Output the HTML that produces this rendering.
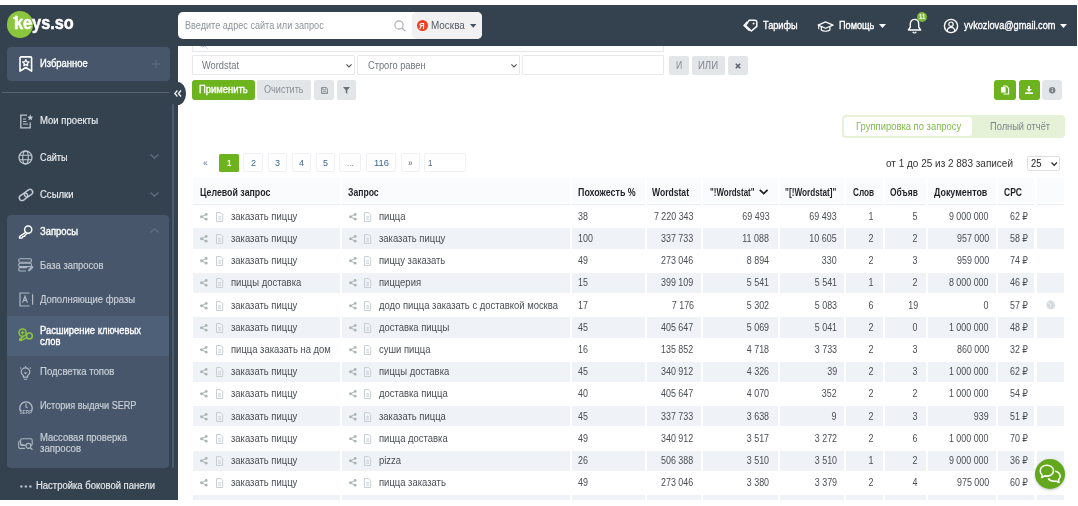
<!DOCTYPE html>
<html lang="ru"><head><meta charset="utf-8"><title>keys.so</title><style>
html,body{margin:0;padding:0;}
body{width:1078px;height:506px;overflow:hidden;background:#fff;position:relative;font-family:'Liberation Sans', sans-serif;}
.root{position:absolute;left:0;top:0;width:1078px;height:506px;overflow:hidden;will-change:transform;}
.a{position:absolute;}
.t{position:absolute;white-space:pre;display:block;}
svg{position:absolute;overflow:visible;}
</style></head><body>
<div class="root">
<div class="a" style="left:192px;top:30px;width:472px;height:22.4px;background:#fff;border:1px solid #e6e8eb;box-sizing:border-box;"></div>
<svg style="left:199px;top:40.4px" width="9" height="9" viewBox="0 0 9 9" ><circle cx="3.6" cy="3.6" r="3.1" fill="none" stroke="#c3c8ce" stroke-width="1"/><path d="M6 6L8.6 8.6" stroke="#c3c8ce" stroke-width="1"/></svg>
<div class="a" style="left:0px;top:5px;width:1077px;height:41.4px;background:#34414e;"></div>
<div class="a" style="left:0px;top:5px;width:177.5px;height:495px;background:#34414e;"></div>
<div class="a" style="left:7.3px;top:11.2px;width:25.6px;height:26.4px;background:#8cc63f;border-radius:13.2px;"></div>
<div class="a" style="left:12.6px;top:17px;width:2.4px;height:1.6px;background:#fff;"></div>
<span id="t0" class="t" style="top:13px;font-size:18px;line-height:20px;color:#fff;font-weight:700;left:14.4px;transform-origin:0 50%;transform:scaleX(0.9052);-webkit-text-stroke:0.5px #fff;">keys.so</span>
<div class="a" style="left:7px;top:46.8px;width:163px;height:34.2px;background:#47566a;border-radius:4px;"></div>
<svg style="left:18.6px;top:55.6px" width="13.6" height="16.6" viewBox="0 0 13.6 16.6" ><path d="M1 1.9a1 1 0 0 1 1-1h9.6a1 1 0 0 1 1 1v13.3L6.8 11.5 1 15.2z" fill="none" stroke="#fff" stroke-width="1.6" stroke-linejoin="round"/><path d="M6.80 3.70L7.74 5.71L9.94 5.98L8.32 7.49L8.74 9.67L6.80 8.60L4.86 9.67L5.28 7.49L3.66 5.98L5.86 5.71z" fill="none" stroke="#fff" stroke-width="1.3" stroke-linejoin="round"/></svg>
<span id="t1" class="t" style="top:58px;font-size:10px;line-height:11px;color:#fff;-webkit-text-stroke:0.35px #fff;left:39.5px;transform-origin:0 50%;transform:scaleX(0.9411);">Избранное</span>
<svg style="left:152px;top:60px" width="8" height="8" viewBox="0 0 8 8" ><path d="M4 0v8M0 4h8" stroke="#5d6d82" stroke-width="1"/></svg>
<div class="a" style="left:2px;top:92px;width:168px;height:1px;background:#566476;"></div>
<div class="a" style="left:168.5px;top:81.5px;width:17px;height:23px;background:#34414e;border-radius:50%"></div>
<svg style="left:174.2px;top:89.8px" width="8" height="7" viewBox="0 0 8 7" ><path d="M3.4 0.5L0.8 3.5 3.4 6.5M7 0.5L4.4 3.5 7 6.5" fill="none" stroke="#fff" stroke-width="1.2"/></svg>
<div class="a" style="left:171.5px;top:104px;width:2.5px;height:364px;background:#4a5a70;border-radius:1px;"></div>
<svg style="left:18.5px;top:113.5px" width="15" height="15" viewBox="0 0 15 15" ><path d="M8 1.2H1.8v12.6h9.4V8.5" fill="none" stroke="#bfc7d0" stroke-width="1.3"/><path d="M4 5h3M4 7.5h3.5M4 10h5" stroke="#bfc7d0" stroke-width="1"/><path d="M11.3 0.6l.9 1.9 2 .3-1.5 1.4.4 2-1.8-1-1.8 1 .4-2L8.4 2.8l2-.3z" fill="#bfc7d0"/></svg>
<span id="t2" class="t" style="top:115px;font-size:10px;line-height:11px;color:#e8ebee;-webkit-text-stroke:0.18px #e8ebee;left:39.6px;transform-origin:0 50%;transform:scaleX(0.9550);">Мои проекты</span>
<svg style="left:17.8px;top:150px" width="15" height="15" viewBox="0 0 15 15" ><circle cx="7.5" cy="7.5" r="6.5" fill="none" stroke="#bfc7d0" stroke-width="1.3"/><ellipse cx="7.5" cy="7.5" rx="2.8" ry="6.5" fill="none" stroke="#bfc7d0" stroke-width="1.1"/><path d="M1 5.3h13M1 9.7h13" stroke="#bfc7d0" stroke-width="1.1"/></svg>
<span id="t3" class="t" style="top:152px;font-size:10px;line-height:11px;color:#e8ebee;-webkit-text-stroke:0.18px #e8ebee;left:39.6px;transform-origin:0 50%;transform:scaleX(0.9091);">Сайты</span>
<svg style="left:149.8px;top:154.2px" width="9" height="5" viewBox="0 0 9 5" ><path d="M0.5 0.5L4.5 4.2 8.5 0.5" fill="none" stroke="#617084" stroke-width="1.3"/></svg>
<svg style="left:18px;top:188.5px" width="16" height="12" viewBox="0 0 16 12" ><g transform="rotate(-36 8 6)" fill="none" stroke="#bfc7d0" stroke-width="1.5"><rect x="0.4" y="3.3" width="9" height="5.4" rx="2.7"/><rect x="6.6" y="3.3" width="9" height="5.4" rx="2.7"/></g></svg>
<span id="t4" class="t" style="top:189px;font-size:10px;line-height:11px;color:#e8ebee;-webkit-text-stroke:0.18px #e8ebee;left:39.6px;transform-origin:0 50%;transform:scaleX(0.9512);">Ссылки</span>
<svg style="left:149.8px;top:192px" width="9" height="5" viewBox="0 0 9 5" ><path d="M0.5 0.5L4.5 4.2 8.5 0.5" fill="none" stroke="#617084" stroke-width="1.3"/></svg>
<div class="a" style="left:7px;top:214.5px;width:161.5px;height:253.5px;background:#47566a;border-radius:4px;"></div>
<svg style="left:17.8px;top:224.5px" width="15" height="14" viewBox="0 0 15 14" ><circle cx="10.2" cy="4.6" r="3.6" fill="none" stroke="#fff" stroke-width="1.5"/><path d="M7.6 7.2L1.5 11.6v1.4h2.6l1-1.6 1.6-.2.6-1.6 1.6-1" fill="none" stroke="#fff" stroke-width="1.4" stroke-linejoin="round" stroke-linecap="round"/></svg>
<span id="t5" class="t" style="top:226px;font-size:10px;line-height:11px;color:#fff;-webkit-text-stroke:0.35px #fff;left:39.6px;transform-origin:0 50%;transform:scaleX(0.9423);">Запросы</span>
<svg style="left:149.8px;top:227.8px" width="9" height="5" viewBox="0 0 9 5" ><path d="M0.5 4.5L4.5 0.8 8.5 4.5" fill="none" stroke="#617084" stroke-width="1.3"/></svg>
<svg style="left:17.8px;top:257.5px" width="16" height="14" viewBox="0 0 16 14" ><rect x="0.8" y="0.8" width="12.6" height="3.4" rx="1.2" fill="none" stroke="#aeb8c4" stroke-width="1.1"/><rect x="0.8" y="5.2" width="12.6" height="3.4" rx="1.2" fill="none" stroke="#aeb8c4" stroke-width="1.1"/><path d="M8 13H2a1.2 1.2 0 0 1-1.2-1.2V10.8A1.2 1.2 0 0 1 2 9.6h7" fill="none" stroke="#aeb8c4" stroke-width="1.1"/><path d="M10 13.4l.6-2.2 3.6-3.4 1.4 1.5-3.5 3.5z" fill="#aeb8c4"/></svg>
<span id="t6" class="t" style="top:260px;font-size:10px;line-height:11px;color:#c9d0d8;-webkit-text-stroke:0.18px #c9d0d8;left:39.6px;transform-origin:0 50%;transform:scaleX(0.9407);">База запросов</span>
<svg style="left:18.5px;top:292px" width="15" height="15" viewBox="0 0 15 15" ><path d="M10.6 1H1v13h9.6" fill="none" stroke="#aeb8c4" stroke-width="1.2"/><path d="M13.6 2.2v10.6" stroke="#aeb8c4" stroke-width="1.2"/><path d="M3.6 10.6L6 4.2 8.4 10.6M4.5 8.4h3" fill="none" stroke="#aeb8c4" stroke-width="1.2"/></svg>
<span id="t7" class="t" style="top:294px;font-size:10px;line-height:11px;color:#c9d0d8;-webkit-text-stroke:0.18px #c9d0d8;left:39.6px;transform-origin:0 50%;transform:scaleX(0.9440);">Дополняющие фразы</span>
<div class="a" style="left:7px;top:316px;width:161.5px;height:39.5px;background:#4e6078;"></div>
<svg style="left:18px;top:328px" width="15" height="15" viewBox="0 0 15 15" ><circle cx="4.6" cy="4.6" r="3.6" fill="none" stroke="#8cc63f" stroke-width="1.5"/><path d="M4.6 2.8v3.6M2.8 4.6h3.6" stroke="#8cc63f" stroke-width="1.1"/><circle cx="11.4" cy="8" r="2.9" fill="none" stroke="#8cc63f" stroke-width="1.5"/><path d="M9 9.6L3.2 12.4l-1.6-.2.4-1.6 1.4.2.2-1.4 1.8-.4" fill="none" stroke="#8cc63f" stroke-width="1.5" stroke-linejoin="round"/></svg>
<span id="t8" class="t" style="top:325px;font-size:10px;line-height:11px;color:#fff;-webkit-text-stroke:0.35px #fff;left:39.6px;transform-origin:0 50%;transform:scaleX(0.9443);">Расширение ключевых</span>
<span id="t9" class="t" style="top:336px;font-size:10px;line-height:11px;color:#fff;-webkit-text-stroke:0.35px #fff;left:39.6px;transform-origin:0 50%;transform:scaleX(0.9392);">слов</span>
<svg style="left:19px;top:365.5px" width="13" height="15" viewBox="0 0 13 15" ><path d="M4.4 11.2V9.6C3 8.8 2.2 7.6 2.2 6.2a4.3 4.3 0 0 1 8.6 0c0 1.4-.8 2.6-2.2 3.4v1.6z" fill="none" stroke="#aeb8c4" stroke-width="1.2"/><path d="M4.8 13.2h3.4M6.5 0v1.2M1.2 1.6l.9.9M11.8 1.6l-.9.9M5.4 6.4l1.1 1.2 1.1-1.2" stroke="#aeb8c4" stroke-width="1.1" fill="none"/></svg>
<span id="t10" class="t" style="top:366px;font-size:10px;line-height:11px;color:#c9d0d8;-webkit-text-stroke:0.18px #c9d0d8;left:39.6px;transform-origin:0 50%;transform:scaleX(0.9583);">Подсветка топов</span>
<svg style="left:17.5px;top:399.5px" width="16" height="14" viewBox="0 0 16 14" ><path d="M2.6 11.2A6.2 6.2 0 1 1 13.4 11.2" fill="none" stroke="#aeb8c4" stroke-width="1.3"/><path d="M8 3.6V7l1.6 1" fill="none" stroke="#aeb8c4" stroke-width="1.1"/><text x="8" y="13.6" font-size="4.6" font-weight="700" text-anchor="middle" fill="#aeb8c4" font-family="Liberation Sans, sans-serif">SERP</text></svg>
<span id="t11" class="t" style="top:400px;font-size:10px;line-height:11px;color:#c9d0d8;-webkit-text-stroke:0.18px #c9d0d8;left:39.6px;transform-origin:0 50%;transform:scaleX(0.9090);">История выдачи SERP</span>
<svg style="left:17.5px;top:437.5px" width="16" height="12" viewBox="0 0 16 12" ><rect x="2.6" y="0.8" width="11.6" height="6.6" rx="1.4" fill="none" stroke="#aeb8c4" stroke-width="1.1"/><path d="M7 10.4H2A1.4 1.4 0 0 1 .7 9V4.4A1.4 1.4 0 0 1 2 3" fill="none" stroke="#aeb8c4" stroke-width="1.1"/><path d="M2.6 6.4h3" stroke="#aeb8c4" stroke-width="1"/><circle cx="10.4" cy="7.8" r="2.5" fill="#47566a" stroke="#aeb8c4" stroke-width="1.2"/><path d="M12.3 9.7l2.2 2" stroke="#aeb8c4" stroke-width="1.3"/></svg>
<span id="t12" class="t" style="top:432px;font-size:10px;line-height:11px;color:#c9d0d8;-webkit-text-stroke:0.18px #c9d0d8;left:39.6px;transform-origin:0 50%;transform:scaleX(0.9492);">Массовая проверка</span>
<span id="t13" class="t" style="top:443px;font-size:10px;line-height:11px;color:#c9d0d8;-webkit-text-stroke:0.18px #c9d0d8;left:39.6px;transform-origin:0 50%;transform:scaleX(0.9608);">запросов</span>
<svg style="left:19.5px;top:484.5px" width="12" height="3" viewBox="0 0 12 3" ><circle cx="1.4" cy="1.5" r="1.3" fill="#aeb8c4"/><circle cx="5.9" cy="1.5" r="1.3" fill="#aeb8c4"/><circle cx="10.4" cy="1.5" r="1.3" fill="#aeb8c4"/></svg>
<span id="t14" class="t" style="top:480px;font-size:10px;line-height:11px;color:#e3e7eb;-webkit-text-stroke:0.18px #e3e7eb;left:36.3px;transform-origin:0 50%;transform:scaleX(0.9473);">Настройка боковой панели</span>
<div class="a" style="left:177.6px;top:12.2px;width:304.6px;height:27.1px;background:#fff;border-radius:5px;"></div>
<div class="a" style="left:411.8px;top:12.2px;width:70.4px;height:27.1px;background:#f1f1f2;border-radius:5px;"></div>
<span id="t15" class="t" style="top:19px;font-size:10.5px;line-height:12px;color:#8d9399;left:185.3px;transform-origin:0 50%;transform:scaleX(0.8681);">Введите адрес сайта или запрос</span>
<svg style="left:394px;top:20px" width="12" height="12" viewBox="0 0 12 12" ><circle cx="5" cy="5" r="4.1" fill="none" stroke="#a9aeb4" stroke-width="1.1"/><path d="M8 8l3.2 3.2" stroke="#a9aeb4" stroke-width="1.2"/></svg>
<div class="a" style="left:416.5px;top:20.2px;width:11px;height:11px;background:#f03e1e;border-radius:6px;"></div>
<span id="t16" class="t" style="top:21px;font-size:8.5px;line-height:10px;color:#fff;font-weight:700;left:419.3px;transform-origin:0 50%;transform:scaleX(0.9166);">Я</span>
<span id="t17" class="t" style="top:19px;font-size:10.5px;line-height:12px;color:#565c64;left:430.5px;transform-origin:0 50%;transform:scaleX(0.9426);">Москва</span>
<svg style="left:469.6px;top:24.2px" width="6.4" height="3.8" viewBox="0 0 6.4 3.8" ><path d="M0 0h6.4L3.2 3.8z" fill="#44536a"/></svg>
<svg style="left:742.5px;top:19px" width="15" height="13" viewBox="0 0 15 13" ><path d="M6.2 1.2h5.6a2 2 0 0 1 2 2v4.2L8.4 12 2.6 6.6z" fill="none" stroke="#fff" stroke-width="1.5" stroke-linejoin="round"/><path d="M4.4 2.6L1 6.4l5.6 5.4" fill="none" stroke="#fff" stroke-width="1.4"/><circle cx="10.6" cy="4.4" r="1" fill="#fff"/></svg>
<span id="t18" class="t" style="top:19px;font-size:10.6px;line-height:12px;color:#fff;-webkit-text-stroke:0.35px #fff;left:762.5px;transform-origin:0 50%;transform:scaleX(0.8618);">Тарифы</span>
<svg style="left:816.8px;top:20.6px" width="17.2" height="11.2" viewBox="0 0 18 12" ><path d="M9 1L1 4.4 9 7.8l8-3.4z" fill="none" stroke="#fff" stroke-width="1.3" stroke-linejoin="round"/><path d="M4.4 6.2v3.4c1.2 1 2.8 1.4 4.6 1.4s3.4-.4 4.6-1.4V6.2" fill="none" stroke="#fff" stroke-width="1.3"/><path d="M1.6 4.8v4" stroke="#fff" stroke-width="1.1"/></svg>
<span id="t19" class="t" style="top:19px;font-size:10.6px;line-height:12px;color:#fff;-webkit-text-stroke:0.35px #fff;left:839px;transform-origin:0 50%;transform:scaleX(0.8651);">Помощь</span>
<svg style="left:879.2px;top:24.4px" width="7" height="4" viewBox="0 0 7 4" ><path d="M0 0h7L3.5 4z" fill="#fff"/></svg>
<svg style="left:907px;top:18px" width="15" height="16" viewBox="0 0 15 16" ><path d="M7.5 1.4c-2.6 0-4.2 2-4.2 4.6v3.2L1.4 12h12.2l-1.9-2.8V6c0-2.6-1.6-4.6-4.2-4.6z" fill="none" stroke="#fff" stroke-width="1.4" stroke-linejoin="round"/><path d="M5.8 13.8a1.8 1.8 0 0 0 3.4 0" fill="none" stroke="#fff" stroke-width="1.2"/></svg>
<div class="a" style="left:917.3px;top:12px;width:9.8px;height:9.8px;background:#7cb83a;border-radius:5px;"></div>
<span id="t20" class="t" style="top:13px;font-size:6.5px;line-height:7px;color:#fff;font-weight:700;left:918.6px;transform-origin:0 50%;transform:scaleX(0.9018);">11</span>
<svg style="left:943.4px;top:18px" width="16" height="16" viewBox="0 0 16 16" ><circle cx="8" cy="8" r="6.6" fill="none" stroke="#fff" stroke-width="1.4"/><circle cx="8" cy="6.2" r="2.2" fill="none" stroke="#fff" stroke-width="1.2"/><path d="M4.2 13.2c.2-2.4 1.6-3.8 3.8-3.8s3.6 1.4 3.8 3.8" fill="none" stroke="#fff" stroke-width="1.2"/></svg>
<span id="t21" class="t" style="top:19px;font-size:10.6px;line-height:12px;color:#fff;-webkit-text-stroke:0.35px #fff;left:964px;transform-origin:0 50%;transform:scaleX(0.8660);">yvkozlova@gmail.com</span>
<svg style="left:1059.5px;top:24px" width="7" height="4" viewBox="0 0 7 4" ><path d="M0 0h7L3.5 4z" fill="#fff"/></svg>
<div class="a" style="left:192px;top:55px;width:162.6px;height:20px;background:#fff;border-radius:1px;border:1px solid #e6e8eb;box-sizing:border-box;"></div>
<span id="t22" class="t" style="top:60px;font-size:10px;line-height:11px;color:#70767d;left:202.3px;transform-origin:0 50%;transform:scaleX(0.9286);">Wordstat</span>
<svg style="left:345.5px;top:63.5px" width="6" height="4" viewBox="0 0 6 4" ><path d="M0.4 0.4L3 3 5.6 0.4" fill="none" stroke="#555" stroke-width="1.1"/></svg>
<div class="a" style="left:357.4px;top:55px;width:162.2px;height:20px;background:#fff;border-radius:1px;border:1px solid #e6e8eb;box-sizing:border-box;"></div>
<span id="t23" class="t" style="top:60px;font-size:10px;line-height:11px;color:#70767d;left:367.9px;transform-origin:0 50%;transform:scaleX(0.9274);">Строго равен</span>
<svg style="left:511px;top:63.5px" width="6" height="4" viewBox="0 0 6 4" ><path d="M0.4 0.4L3 3 5.6 0.4" fill="none" stroke="#555" stroke-width="1.1"/></svg>
<div class="a" style="left:522.3px;top:55px;width:142px;height:19.6px;background:#fff;border-radius:1px;border:1px solid #e6e8eb;box-sizing:border-box;"></div>
<div class="a" style="left:669px;top:56px;width:19.7px;height:19.3px;background:#e3e6e9;border-radius:2px;"></div>
<span id="t24" class="t" style="top:60px;font-size:10px;line-height:11px;color:#838a92;left:675.7px;transform-origin:0 50%;transform:scaleX(0.8626);">И</span>
<div class="a" style="left:691.5px;top:56px;width:33.5px;height:19.3px;background:#e3e6e9;border-radius:2px;"></div>
<span id="t25" class="t" style="top:60px;font-size:10px;line-height:11px;color:#838a92;left:698.2px;transform-origin:0 50%;transform:scaleX(0.9552);">ИЛИ</span>
<div class="a" style="left:727.7px;top:56px;width:20px;height:19.3px;background:#e3e6e9;border-radius:2px;"></div>
<svg style="left:734.8px;top:63px" width="6" height="6" viewBox="0 0 6 6" ><path d="M0.8 0.8l4.4 4.4M5.2 0.8L0.8 5.2" stroke="#59606a" stroke-width="1.5"/></svg>
<div class="a" style="left:192px;top:80px;width:62.6px;height:19.5px;background:#6cb31d;border-radius:3px;"></div>
<span id="t26" class="t" style="top:84px;font-size:10px;line-height:11px;color:#fff;-webkit-text-stroke:0.35px #fff;left:198.9px;transform-origin:0 50%;transform:scaleX(0.9425);">Применить</span>
<div class="a" style="left:257px;top:80px;width:53.8px;height:19.5px;background:#e3e6e9;border-radius:2px;"></div>
<span id="t27" class="t" style="top:84px;font-size:10px;line-height:11px;color:#8b9198;left:264.3px;transform-origin:0 50%;transform:scaleX(0.9097);">Очистить</span>
<div class="a" style="left:314px;top:80px;width:20px;height:19.5px;background:#e3e6e9;border-radius:2px;"></div>
<svg style="left:320.5px;top:86.5px" width="7" height="7" viewBox="0 0 7 7" ><path d="M0.5 0.5h4.8l1.2 1.2v4.8h-6z" fill="none" stroke="#8b9198" stroke-width="1"/><path d="M1.8 0.8v2h3v-2M2 6.4V4.4h3v2" fill="none" stroke="#8b9198" stroke-width=".9"/></svg>
<div class="a" style="left:337px;top:80px;width:19.3px;height:19.5px;background:#e3e6e9;border-radius:2px;"></div>
<svg style="left:343.2px;top:86.6px" width="7" height="7" viewBox="0 0 7 7" ><path d="M0 0h7L4.3 3.2V7L2.7 5.8V3.2z" fill="#6a717a"/></svg>
<div class="a" style="left:994px;top:80px;width:22px;height:19.5px;background:#6cb31d;border-radius:3px;"></div>
<svg style="left:1001px;top:86px" width="8" height="8" viewBox="0 0 8 8" ><path d="M0 1h4.6v5.6H0z" fill="#fff"/><path d="M2 0h3.4l2.2 2.2V8H2.6" fill="none" stroke="#fff" stroke-width="1.1"/></svg>
<div class="a" style="left:1018.6px;top:80px;width:21.2px;height:19.5px;background:#6cb31d;border-radius:3px;"></div>
<svg style="left:1025.2px;top:86px" width="8" height="8" viewBox="0 0 8 8" ><path d="M3 0h2v3h2L4 6 1 3h2z" fill="#fff"/><path d="M0 6.4h8V8H0z" fill="#fff"/></svg>
<div class="a" style="left:1042px;top:80px;width:20.3px;height:19.5px;background:#e3e6e9;border-radius:3px;"></div>
<svg style="left:1049px;top:86.6px" width="6.4" height="6.4" viewBox="0 0 6.4 6.4" ><circle cx="3.2" cy="3.2" r="3.2" fill="#7b828a"/><path d="M3.2 2.8v2.2" stroke="#e3e6e9" stroke-width="1"/><circle cx="3.2" cy="1.6" r=".6" fill="#e3e6e9"/></svg>
<div class="a" style="left:842px;top:115.3px;width:223px;height:23px;background:#e5f2d8;border-radius:4px;"></div>
<div class="a" style="left:844.3px;top:117px;width:128px;height:19.3px;background:#fff;border-radius:3px;"></div>
<span id="t28" class="t" style="top:121px;font-size:10px;line-height:11px;color:#82bb50;left:855.8px;transform-origin:0 50%;transform:scaleX(0.9432);">Группировка по запросу</span>
<span id="t29" class="t" style="top:121px;font-size:10px;line-height:11px;color:#7d858c;left:990.3px;transform-origin:0 50%;transform:scaleX(0.9286);">Полный отчёт</span>
<span id="t30" class="t" style="top:158px;font-size:9px;line-height:10px;color:#8a97ab;font-weight:700;left:203.4px;transform-origin:0 50%;transform:scaleX(0.9171);">«</span>
<div class="a" style="left:219px;top:154.4px;width:19.8px;height:17.7px;background:#6cb31d;border-radius:1.5px;"></div>
<span id="t31" class="t" style="top:157px;font-size:9.6px;line-height:11px;color:#fff;font-weight:700;left:226.8px;transform-origin:0 50%;transform:scaleX(0.8234);">1</span>
<div class="a" style="left:243.4px;top:153.3px;width:19.2px;height:18.8px;background:#fff;border-radius:2px;border:1px solid #eff0f3;box-sizing:border-box;"></div>
<span id="t32" class="t" style="top:157px;font-size:9.6px;line-height:11px;color:#3e6592;left:250.6px;transform-origin:0 50%;transform:scaleX(0.9357);">2</span>
<div class="a" style="left:267.6px;top:153.3px;width:19.2px;height:18.8px;background:#fff;border-radius:2px;border:1px solid #eff0f3;box-sizing:border-box;"></div>
<span id="t33" class="t" style="top:157px;font-size:9.6px;line-height:11px;color:#3e6592;left:274.8px;transform-origin:0 50%;transform:scaleX(0.9357);">3</span>
<div class="a" style="left:291.6px;top:153.3px;width:19.4px;height:18.8px;background:#fff;border-radius:2px;border:1px solid #eff0f3;box-sizing:border-box;"></div>
<span id="t34" class="t" style="top:157px;font-size:9.6px;line-height:11px;color:#3e6592;left:298.8px;transform-origin:0 50%;transform:scaleX(0.9357);">4</span>
<div class="a" style="left:315.8px;top:153.3px;width:19.4px;height:18.8px;background:#fff;border-radius:2px;border:1px solid #eff0f3;box-sizing:border-box;"></div>
<span id="t35" class="t" style="top:157px;font-size:9.6px;line-height:11px;color:#3e6592;left:323px;transform-origin:0 50%;transform:scaleX(0.9357);">5</span>
<div class="a" style="left:339px;top:153.3px;width:22.4px;height:18.8px;background:#fff;border-radius:2px;border:1px solid #eff0f3;box-sizing:border-box;"></div>
<span id="t36" class="t" style="top:157px;font-size:9.6px;line-height:11px;color:#8a929c;left:346.8px;transform-origin:0 50%;transform:scaleX(0.8250);">...</span>
<div class="a" style="left:365.9px;top:153.3px;width:30.6px;height:18.8px;background:#fff;border-radius:2px;border:1px solid #eff0f3;box-sizing:border-box;"></div>
<span id="t37" class="t" style="top:157px;font-size:9.6px;line-height:11px;color:#3e6592;left:373.6px;transform-origin:0 50%;transform:scaleX(0.9806);">116</span>
<div class="a" style="left:400.7px;top:153.3px;width:19.5px;height:18.8px;background:#fff;border-radius:2px;border:1px solid #eff0f3;box-sizing:border-box;"></div>
<span id="t38" class="t" style="top:158px;font-size:9px;line-height:10px;color:#7f8da3;font-weight:700;left:407.8px;transform-origin:0 50%;transform:scaleX(0.9171);">»</span>
<div class="a" style="left:423.5px;top:153.3px;width:42.6px;height:18.8px;background:#fff;border-radius:2px;border:1px solid #eff0f3;box-sizing:border-box;"></div>
<span id="t39" class="t" style="top:157px;font-size:9.6px;line-height:11px;color:#4a6288;left:428.4px;transform-origin:0 50%;transform:scaleX(0.8234);">1</span>
<span id="t40" class="t" style="top:158px;font-size:10.4px;line-height:11px;color:#333;left:886.4px;transform-origin:0 50%;transform:scaleX(0.9611);">от 1 до 25 из 2 883 записей</span>
<div class="a" style="left:1027.4px;top:156.3px;width:32.2px;height:14.4px;background:#fff;border-radius:2px;border:1px solid #dcdfe3;box-sizing:border-box;"></div>
<span id="t41" class="t" style="top:158px;font-size:10.4px;line-height:11px;color:#222;left:1031.3px;transform-origin:0 50%;transform:scaleX(0.8995);">25</span>
<svg style="left:1050.6px;top:161.6px" width="6.4" height="4.4" viewBox="0 0 6.4 4.4" ><path d="M0.5 0.5L3.2 3.3 5.9 0.5" fill="none" stroke="#222" stroke-width="1.2"/></svg>
<div class="a" style="left:193px;top:178px;width:146.5px;height:25px;background:#fafbfc;"></div>
<div class="a" style="left:193px;top:203.8px;width:146.5px;height:1.3px;background:#e8eaee;"></div>
<div class="a" style="left:341.7px;top:178px;width:228.1px;height:25px;background:#fafbfc;"></div>
<div class="a" style="left:341.7px;top:203.8px;width:228.1px;height:1.3px;background:#e8eaee;"></div>
<div class="a" style="left:571.6px;top:178px;width:73.4px;height:25px;background:#fafbfc;"></div>
<div class="a" style="left:571.6px;top:203.8px;width:73.4px;height:1.3px;background:#e8eaee;"></div>
<div class="a" style="left:646.9px;top:178px;width:54.1px;height:25px;background:#fafbfc;"></div>
<div class="a" style="left:646.9px;top:203.8px;width:54.1px;height:1.3px;background:#e8eaee;"></div>
<div class="a" style="left:703.2px;top:178px;width:74.7px;height:25px;background:#fafbfc;"></div>
<div class="a" style="left:703.2px;top:203.8px;width:74.7px;height:1.3px;background:#e8eaee;"></div>
<div class="a" style="left:780px;top:178px;width:64.3px;height:25px;background:#fafbfc;"></div>
<div class="a" style="left:780px;top:203.8px;width:64.3px;height:1.3px;background:#e8eaee;"></div>
<div class="a" style="left:846.4px;top:178px;width:36.3px;height:25px;background:#fafbfc;"></div>
<div class="a" style="left:846.4px;top:203.8px;width:36.3px;height:1.3px;background:#e8eaee;"></div>
<div class="a" style="left:884.7px;top:178px;width:41.7px;height:25px;background:#fafbfc;"></div>
<div class="a" style="left:884.7px;top:203.8px;width:41.7px;height:1.3px;background:#e8eaee;"></div>
<div class="a" style="left:928.3px;top:178px;width:67.8px;height:25px;background:#fafbfc;"></div>
<div class="a" style="left:928.3px;top:203.8px;width:67.8px;height:1.3px;background:#e8eaee;"></div>
<div class="a" style="left:998.3px;top:178px;width:35.9px;height:25px;background:#fafbfc;"></div>
<div class="a" style="left:998.3px;top:203.8px;width:35.9px;height:1.3px;background:#e8eaee;"></div>
<div class="a" style="left:1036.5px;top:178px;width:27.5px;height:25px;background:#fafbfc;"></div>
<div class="a" style="left:1036.5px;top:203.8px;width:27.5px;height:1.3px;background:#e8eaee;"></div>
<span id="t42" class="t" style="top:187px;font-size:10px;line-height:11px;color:#1f2328;font-weight:700;left:199.5px;transform-origin:0 50%;transform:scaleX(0.8809);">Целевой запрос</span>
<span id="t43" class="t" style="top:187px;font-size:10px;line-height:11px;color:#1f2328;font-weight:700;left:348.4px;transform-origin:0 50%;transform:scaleX(0.8616);">Запрос</span>
<span id="t44" class="t" style="top:187px;font-size:10px;line-height:11px;color:#1f2328;font-weight:700;left:578px;transform-origin:0 50%;transform:scaleX(0.8877);">Похожесть %</span>
<span id="t45" class="t" style="top:187px;font-size:10px;line-height:11px;color:#1f2328;font-weight:700;left:652.4px;transform-origin:0 50%;transform:scaleX(0.8573);">Wordstat</span>
<span id="t46" class="t" style="top:187px;font-size:10px;line-height:11px;color:#1f2328;font-weight:700;left:709.5px;transform-origin:0 50%;transform:scaleX(0.7951);">&quot;!Wordstat&quot;</span>
<svg style="left:759px;top:188.5px" width="9.4" height="6" viewBox="0 0 9.4 6" ><path d="M0.8 0.8L4.7 4.6 8.6 0.8" fill="none" stroke="#1f2328" stroke-width="1.8"/></svg>
<span id="t47" class="t" style="top:187px;font-size:10px;line-height:11px;color:#1f2328;font-weight:700;left:784.9px;transform-origin:0 50%;transform:scaleX(0.8224);">&quot;[!Wordstat]&quot;</span>
<span id="t48" class="t" style="top:187px;font-size:10px;line-height:11px;color:#1f2328;font-weight:700;left:852.8px;transform-origin:0 50%;transform:scaleX(0.8209);">Слов</span>
<span id="t49" class="t" style="top:187px;font-size:10px;line-height:11px;color:#1f2328;font-weight:700;left:889.9px;transform-origin:0 50%;transform:scaleX(0.8396);">Объяв</span>
<span id="t50" class="t" style="top:187px;font-size:10px;line-height:11px;color:#1f2328;font-weight:700;left:934.2px;transform-origin:0 50%;transform:scaleX(0.8911);">Документов</span>
<span id="t51" class="t" style="top:187px;font-size:10px;line-height:11px;color:#1f2328;font-weight:700;left:1004.3px;transform-origin:0 50%;transform:scaleX(0.8521);">CPC</span>
<svg style="left:200.2px;top:213.3px" width="7.6" height="7.6" viewBox="0 0 7.6 7.6" ><circle cx="1.5" cy="3.8" r="1.5" fill="#aab6b3"/><circle cx="6.2" cy="1.4" r="1.4" fill="#aab6b3"/><circle cx="6.2" cy="6.2" r="1.4" fill="#aab6b3"/><path d="M1.5 3.8L6.2 1.4M1.5 3.8L6.2 6.2" stroke="#aab6b3" stroke-width="1"/></svg>
<svg style="left:216px;top:212px" width="7.2" height="10" viewBox="0 0 7.2 10" ><path d="M0.5 0.5h4.2l2 2v7h-6.2z" fill="none" stroke="#c3c9cf" stroke-width=".9"/><path d="M2.2 4.6h2.8M2.2 6h2.8M2.2 7.4h2.8" stroke="#c3c9cf" stroke-width=".7"/></svg>
<span id="t52" class="t" style="top:211px;font-size:10px;line-height:11px;color:#4a4e54;left:231px;transform-origin:0 50%;transform:scaleX(0.9450);">заказать пиццу</span>
<svg style="left:348.9px;top:213.3px" width="7.6" height="7.6" viewBox="0 0 7.6 7.6" ><circle cx="1.5" cy="3.8" r="1.5" fill="#aab6b3"/><circle cx="6.2" cy="1.4" r="1.4" fill="#aab6b3"/><circle cx="6.2" cy="6.2" r="1.4" fill="#aab6b3"/><path d="M1.5 3.8L6.2 1.4M1.5 3.8L6.2 6.2" stroke="#aab6b3" stroke-width="1"/></svg>
<svg style="left:364.4px;top:212px" width="7.2" height="10" viewBox="0 0 7.2 10" ><path d="M0.5 0.5h4.2l2 2v7h-6.2z" fill="none" stroke="#c3c9cf" stroke-width=".9"/><path d="M2.2 4.6h2.8M2.2 6h2.8M2.2 7.4h2.8" stroke="#c3c9cf" stroke-width=".7"/></svg>
<span id="t53" class="t" style="top:211px;font-size:10px;line-height:11px;color:#4a4e54;left:379px;transform-origin:0 50%;transform:scaleX(0.9450);">пицца</span>
<span id="t54" class="t" style="top:211px;font-size:10px;line-height:11px;color:#4a4e54;left:578px;transform-origin:0 50%;transform:scaleX(0.8900);">38</span>
<span id="t55" class="t" style="top:211px;font-size:10px;line-height:11px;color:#4a4e54;right:384.4px;transform-origin:100% 50%;transform:scaleX(0.8900);">7 220 343</span>
<span id="t56" class="t" style="top:211px;font-size:10px;line-height:11px;color:#4a4e54;right:308.7px;transform-origin:100% 50%;transform:scaleX(0.8900);">69 493</span>
<span id="t57" class="t" style="top:211px;font-size:10px;line-height:11px;color:#4a4e54;right:241px;transform-origin:100% 50%;transform:scaleX(0.8900);">69 493</span>
<span id="t58" class="t" style="top:211px;font-size:10px;line-height:11px;color:#4a4e54;right:204px;transform-origin:100% 50%;transform:scaleX(0.8900);">1</span>
<span id="t59" class="t" style="top:211px;font-size:10px;line-height:11px;color:#4a4e54;right:160px;transform-origin:100% 50%;transform:scaleX(0.8900);">5</span>
<span id="t60" class="t" style="top:211px;font-size:10px;line-height:11px;color:#4a4e54;right:89.3px;transform-origin:100% 50%;transform:scaleX(0.8900);">9 000 000</span>
<span id="t61" class="t" style="top:211px;font-size:10px;line-height:11px;color:#4a4e54;left:1009.8px;transform-origin:0 50%;transform:scaleX(0.8875);">62 <span style="font-family:DejaVu Sans,sans-serif">₽</span></span>
<div class="a" style="left:193px;top:228.32px;width:146.5px;height:20.4px;background:#eff3f7;"></div>
<div class="a" style="left:341.7px;top:228.32px;width:228.1px;height:20.4px;background:#eff3f7;"></div>
<div class="a" style="left:571.6px;top:228.32px;width:73.4px;height:20.4px;background:#eff3f7;"></div>
<div class="a" style="left:646.9px;top:228.32px;width:54.1px;height:20.4px;background:#eff3f7;"></div>
<div class="a" style="left:703.2px;top:228.32px;width:74.7px;height:20.4px;background:#eff3f7;"></div>
<div class="a" style="left:780px;top:228.32px;width:64.3px;height:20.4px;background:#eff3f7;"></div>
<div class="a" style="left:846.4px;top:228.32px;width:36.3px;height:20.4px;background:#eff3f7;"></div>
<div class="a" style="left:884.7px;top:228.32px;width:41.7px;height:20.4px;background:#eff3f7;"></div>
<div class="a" style="left:928.3px;top:228.32px;width:67.8px;height:20.4px;background:#eff3f7;"></div>
<div class="a" style="left:998.3px;top:228.32px;width:35.9px;height:20.4px;background:#eff3f7;"></div>
<div class="a" style="left:1036.5px;top:228.32px;width:27.5px;height:20.4px;background:#eff3f7;"></div>
<svg style="left:200.2px;top:235.3px" width="7.6" height="7.6" viewBox="0 0 7.6 7.6" ><circle cx="1.5" cy="3.8" r="1.5" fill="#aab6b3"/><circle cx="6.2" cy="1.4" r="1.4" fill="#aab6b3"/><circle cx="6.2" cy="6.2" r="1.4" fill="#aab6b3"/><path d="M1.5 3.8L6.2 1.4M1.5 3.8L6.2 6.2" stroke="#aab6b3" stroke-width="1"/></svg>
<svg style="left:216px;top:234px" width="7.2" height="10" viewBox="0 0 7.2 10" ><path d="M0.5 0.5h4.2l2 2v7h-6.2z" fill="none" stroke="#c3c9cf" stroke-width=".9"/><path d="M2.2 4.6h2.8M2.2 6h2.8M2.2 7.4h2.8" stroke="#c3c9cf" stroke-width=".7"/></svg>
<span id="t62" class="t" style="top:233px;font-size:10px;line-height:11px;color:#4a4e54;left:231px;transform-origin:0 50%;transform:scaleX(0.9450);">заказать пиццу</span>
<svg style="left:348.9px;top:235.3px" width="7.6" height="7.6" viewBox="0 0 7.6 7.6" ><circle cx="1.5" cy="3.8" r="1.5" fill="#aab6b3"/><circle cx="6.2" cy="1.4" r="1.4" fill="#aab6b3"/><circle cx="6.2" cy="6.2" r="1.4" fill="#aab6b3"/><path d="M1.5 3.8L6.2 1.4M1.5 3.8L6.2 6.2" stroke="#aab6b3" stroke-width="1"/></svg>
<svg style="left:364.4px;top:234px" width="7.2" height="10" viewBox="0 0 7.2 10" ><path d="M0.5 0.5h4.2l2 2v7h-6.2z" fill="none" stroke="#c3c9cf" stroke-width=".9"/><path d="M2.2 4.6h2.8M2.2 6h2.8M2.2 7.4h2.8" stroke="#c3c9cf" stroke-width=".7"/></svg>
<span id="t63" class="t" style="top:233px;font-size:10px;line-height:11px;color:#4a4e54;left:379px;transform-origin:0 50%;transform:scaleX(0.9450);">заказать пиццу</span>
<span id="t64" class="t" style="top:233px;font-size:10px;line-height:11px;color:#4a4e54;left:578px;transform-origin:0 50%;transform:scaleX(0.8900);">100</span>
<span id="t65" class="t" style="top:233px;font-size:10px;line-height:11px;color:#4a4e54;right:384.4px;transform-origin:100% 50%;transform:scaleX(0.8900);">337 733</span>
<span id="t66" class="t" style="top:233px;font-size:10px;line-height:11px;color:#4a4e54;right:308.7px;transform-origin:100% 50%;transform:scaleX(0.8900);">11 088</span>
<span id="t67" class="t" style="top:233px;font-size:10px;line-height:11px;color:#4a4e54;right:241px;transform-origin:100% 50%;transform:scaleX(0.8900);">10 605</span>
<span id="t68" class="t" style="top:233px;font-size:10px;line-height:11px;color:#4a4e54;right:204px;transform-origin:100% 50%;transform:scaleX(0.8900);">2</span>
<span id="t69" class="t" style="top:233px;font-size:10px;line-height:11px;color:#4a4e54;right:160px;transform-origin:100% 50%;transform:scaleX(0.8900);">2</span>
<span id="t70" class="t" style="top:233px;font-size:10px;line-height:11px;color:#4a4e54;right:89.3px;transform-origin:100% 50%;transform:scaleX(0.8900);">957 000</span>
<span id="t71" class="t" style="top:233px;font-size:10px;line-height:11px;color:#4a4e54;left:1009.8px;transform-origin:0 50%;transform:scaleX(0.8875);">58 <span style="font-family:DejaVu Sans,sans-serif">₽</span></span>
<svg style="left:200.2px;top:257.3px" width="7.6" height="7.6" viewBox="0 0 7.6 7.6" ><circle cx="1.5" cy="3.8" r="1.5" fill="#aab6b3"/><circle cx="6.2" cy="1.4" r="1.4" fill="#aab6b3"/><circle cx="6.2" cy="6.2" r="1.4" fill="#aab6b3"/><path d="M1.5 3.8L6.2 1.4M1.5 3.8L6.2 6.2" stroke="#aab6b3" stroke-width="1"/></svg>
<svg style="left:216px;top:256px" width="7.2" height="10" viewBox="0 0 7.2 10" ><path d="M0.5 0.5h4.2l2 2v7h-6.2z" fill="none" stroke="#c3c9cf" stroke-width=".9"/><path d="M2.2 4.6h2.8M2.2 6h2.8M2.2 7.4h2.8" stroke="#c3c9cf" stroke-width=".7"/></svg>
<span id="t72" class="t" style="top:255px;font-size:10px;line-height:11px;color:#4a4e54;left:231px;transform-origin:0 50%;transform:scaleX(0.9450);">заказать пиццу</span>
<svg style="left:348.9px;top:257.3px" width="7.6" height="7.6" viewBox="0 0 7.6 7.6" ><circle cx="1.5" cy="3.8" r="1.5" fill="#aab6b3"/><circle cx="6.2" cy="1.4" r="1.4" fill="#aab6b3"/><circle cx="6.2" cy="6.2" r="1.4" fill="#aab6b3"/><path d="M1.5 3.8L6.2 1.4M1.5 3.8L6.2 6.2" stroke="#aab6b3" stroke-width="1"/></svg>
<svg style="left:364.4px;top:256px" width="7.2" height="10" viewBox="0 0 7.2 10" ><path d="M0.5 0.5h4.2l2 2v7h-6.2z" fill="none" stroke="#c3c9cf" stroke-width=".9"/><path d="M2.2 4.6h2.8M2.2 6h2.8M2.2 7.4h2.8" stroke="#c3c9cf" stroke-width=".7"/></svg>
<span id="t73" class="t" style="top:255px;font-size:10px;line-height:11px;color:#4a4e54;left:379px;transform-origin:0 50%;transform:scaleX(0.9450);">пиццу заказать</span>
<span id="t74" class="t" style="top:255px;font-size:10px;line-height:11px;color:#4a4e54;left:578px;transform-origin:0 50%;transform:scaleX(0.8900);">49</span>
<span id="t75" class="t" style="top:255px;font-size:10px;line-height:11px;color:#4a4e54;right:384.4px;transform-origin:100% 50%;transform:scaleX(0.8900);">273 046</span>
<span id="t76" class="t" style="top:255px;font-size:10px;line-height:11px;color:#4a4e54;right:308.7px;transform-origin:100% 50%;transform:scaleX(0.8900);">8 894</span>
<span id="t77" class="t" style="top:255px;font-size:10px;line-height:11px;color:#4a4e54;right:241px;transform-origin:100% 50%;transform:scaleX(0.8900);">330</span>
<span id="t78" class="t" style="top:255px;font-size:10px;line-height:11px;color:#4a4e54;right:204px;transform-origin:100% 50%;transform:scaleX(0.8900);">2</span>
<span id="t79" class="t" style="top:255px;font-size:10px;line-height:11px;color:#4a4e54;right:160px;transform-origin:100% 50%;transform:scaleX(0.8900);">3</span>
<span id="t80" class="t" style="top:255px;font-size:10px;line-height:11px;color:#4a4e54;right:89.3px;transform-origin:100% 50%;transform:scaleX(0.8900);">959 000</span>
<span id="t81" class="t" style="top:255px;font-size:10px;line-height:11px;color:#4a4e54;left:1009.8px;transform-origin:0 50%;transform:scaleX(0.8875);">74 <span style="font-family:DejaVu Sans,sans-serif">₽</span></span>
<div class="a" style="left:193px;top:272.76px;width:146.5px;height:20.4px;background:#eff3f7;"></div>
<div class="a" style="left:341.7px;top:272.76px;width:228.1px;height:20.4px;background:#eff3f7;"></div>
<div class="a" style="left:571.6px;top:272.76px;width:73.4px;height:20.4px;background:#eff3f7;"></div>
<div class="a" style="left:646.9px;top:272.76px;width:54.1px;height:20.4px;background:#eff3f7;"></div>
<div class="a" style="left:703.2px;top:272.76px;width:74.7px;height:20.4px;background:#eff3f7;"></div>
<div class="a" style="left:780px;top:272.76px;width:64.3px;height:20.4px;background:#eff3f7;"></div>
<div class="a" style="left:846.4px;top:272.76px;width:36.3px;height:20.4px;background:#eff3f7;"></div>
<div class="a" style="left:884.7px;top:272.76px;width:41.7px;height:20.4px;background:#eff3f7;"></div>
<div class="a" style="left:928.3px;top:272.76px;width:67.8px;height:20.4px;background:#eff3f7;"></div>
<div class="a" style="left:998.3px;top:272.76px;width:35.9px;height:20.4px;background:#eff3f7;"></div>
<div class="a" style="left:1036.5px;top:272.76px;width:27.5px;height:20.4px;background:#eff3f7;"></div>
<svg style="left:200.2px;top:279.3px" width="7.6" height="7.6" viewBox="0 0 7.6 7.6" ><circle cx="1.5" cy="3.8" r="1.5" fill="#aab6b3"/><circle cx="6.2" cy="1.4" r="1.4" fill="#aab6b3"/><circle cx="6.2" cy="6.2" r="1.4" fill="#aab6b3"/><path d="M1.5 3.8L6.2 1.4M1.5 3.8L6.2 6.2" stroke="#aab6b3" stroke-width="1"/></svg>
<svg style="left:216px;top:278px" width="7.2" height="10" viewBox="0 0 7.2 10" ><path d="M0.5 0.5h4.2l2 2v7h-6.2z" fill="none" stroke="#c3c9cf" stroke-width=".9"/><path d="M2.2 4.6h2.8M2.2 6h2.8M2.2 7.4h2.8" stroke="#c3c9cf" stroke-width=".7"/></svg>
<span id="t82" class="t" style="top:277px;font-size:10px;line-height:11px;color:#4a4e54;left:231px;transform-origin:0 50%;transform:scaleX(0.9450);">пиццы доставка</span>
<svg style="left:348.9px;top:279.3px" width="7.6" height="7.6" viewBox="0 0 7.6 7.6" ><circle cx="1.5" cy="3.8" r="1.5" fill="#aab6b3"/><circle cx="6.2" cy="1.4" r="1.4" fill="#aab6b3"/><circle cx="6.2" cy="6.2" r="1.4" fill="#aab6b3"/><path d="M1.5 3.8L6.2 1.4M1.5 3.8L6.2 6.2" stroke="#aab6b3" stroke-width="1"/></svg>
<svg style="left:364.4px;top:278px" width="7.2" height="10" viewBox="0 0 7.2 10" ><path d="M0.5 0.5h4.2l2 2v7h-6.2z" fill="none" stroke="#c3c9cf" stroke-width=".9"/><path d="M2.2 4.6h2.8M2.2 6h2.8M2.2 7.4h2.8" stroke="#c3c9cf" stroke-width=".7"/></svg>
<span id="t83" class="t" style="top:277px;font-size:10px;line-height:11px;color:#4a4e54;left:379px;transform-origin:0 50%;transform:scaleX(0.9450);">пиццерия</span>
<span id="t84" class="t" style="top:277px;font-size:10px;line-height:11px;color:#4a4e54;left:578px;transform-origin:0 50%;transform:scaleX(0.8900);">15</span>
<span id="t85" class="t" style="top:277px;font-size:10px;line-height:11px;color:#4a4e54;right:384.4px;transform-origin:100% 50%;transform:scaleX(0.8900);">399 109</span>
<span id="t86" class="t" style="top:277px;font-size:10px;line-height:11px;color:#4a4e54;right:308.7px;transform-origin:100% 50%;transform:scaleX(0.8900);">5 541</span>
<span id="t87" class="t" style="top:277px;font-size:10px;line-height:11px;color:#4a4e54;right:241px;transform-origin:100% 50%;transform:scaleX(0.8900);">5 541</span>
<span id="t88" class="t" style="top:277px;font-size:10px;line-height:11px;color:#4a4e54;right:204px;transform-origin:100% 50%;transform:scaleX(0.8900);">1</span>
<span id="t89" class="t" style="top:277px;font-size:10px;line-height:11px;color:#4a4e54;right:160px;transform-origin:100% 50%;transform:scaleX(0.8900);">2</span>
<span id="t90" class="t" style="top:277px;font-size:10px;line-height:11px;color:#4a4e54;right:89.3px;transform-origin:100% 50%;transform:scaleX(0.8900);">8 000 000</span>
<span id="t91" class="t" style="top:277px;font-size:10px;line-height:11px;color:#4a4e54;left:1009.8px;transform-origin:0 50%;transform:scaleX(0.8875);">46 <span style="font-family:DejaVu Sans,sans-serif">₽</span></span>
<svg style="left:200.2px;top:302.3px" width="7.6" height="7.6" viewBox="0 0 7.6 7.6" ><circle cx="1.5" cy="3.8" r="1.5" fill="#aab6b3"/><circle cx="6.2" cy="1.4" r="1.4" fill="#aab6b3"/><circle cx="6.2" cy="6.2" r="1.4" fill="#aab6b3"/><path d="M1.5 3.8L6.2 1.4M1.5 3.8L6.2 6.2" stroke="#aab6b3" stroke-width="1"/></svg>
<svg style="left:216px;top:301px" width="7.2" height="10" viewBox="0 0 7.2 10" ><path d="M0.5 0.5h4.2l2 2v7h-6.2z" fill="none" stroke="#c3c9cf" stroke-width=".9"/><path d="M2.2 4.6h2.8M2.2 6h2.8M2.2 7.4h2.8" stroke="#c3c9cf" stroke-width=".7"/></svg>
<span id="t92" class="t" style="top:300px;font-size:10px;line-height:11px;color:#4a4e54;left:231px;transform-origin:0 50%;transform:scaleX(0.9450);">заказать пиццу</span>
<svg style="left:348.9px;top:302.3px" width="7.6" height="7.6" viewBox="0 0 7.6 7.6" ><circle cx="1.5" cy="3.8" r="1.5" fill="#aab6b3"/><circle cx="6.2" cy="1.4" r="1.4" fill="#aab6b3"/><circle cx="6.2" cy="6.2" r="1.4" fill="#aab6b3"/><path d="M1.5 3.8L6.2 1.4M1.5 3.8L6.2 6.2" stroke="#aab6b3" stroke-width="1"/></svg>
<svg style="left:364.4px;top:301px" width="7.2" height="10" viewBox="0 0 7.2 10" ><path d="M0.5 0.5h4.2l2 2v7h-6.2z" fill="none" stroke="#c3c9cf" stroke-width=".9"/><path d="M2.2 4.6h2.8M2.2 6h2.8M2.2 7.4h2.8" stroke="#c3c9cf" stroke-width=".7"/></svg>
<span id="t93" class="t" style="top:300px;font-size:10px;line-height:11px;color:#4a4e54;left:379px;transform-origin:0 50%;transform:scaleX(0.9450);">додо пицца заказать с доставкой москва</span>
<span id="t94" class="t" style="top:300px;font-size:10px;line-height:11px;color:#4a4e54;left:578px;transform-origin:0 50%;transform:scaleX(0.8900);">17</span>
<span id="t95" class="t" style="top:300px;font-size:10px;line-height:11px;color:#4a4e54;right:384.4px;transform-origin:100% 50%;transform:scaleX(0.8900);">7 176</span>
<span id="t96" class="t" style="top:300px;font-size:10px;line-height:11px;color:#4a4e54;right:308.7px;transform-origin:100% 50%;transform:scaleX(0.8900);">5 302</span>
<span id="t97" class="t" style="top:300px;font-size:10px;line-height:11px;color:#4a4e54;right:241px;transform-origin:100% 50%;transform:scaleX(0.8900);">5 083</span>
<span id="t98" class="t" style="top:300px;font-size:10px;line-height:11px;color:#4a4e54;right:204px;transform-origin:100% 50%;transform:scaleX(0.8900);">6</span>
<span id="t99" class="t" style="top:300px;font-size:10px;line-height:11px;color:#4a4e54;right:160px;transform-origin:100% 50%;transform:scaleX(0.8900);">19</span>
<span id="t100" class="t" style="top:300px;font-size:10px;line-height:11px;color:#4a4e54;right:89.3px;transform-origin:100% 50%;transform:scaleX(0.8900);">0</span>
<span id="t101" class="t" style="top:300px;font-size:10px;line-height:11px;color:#4a4e54;left:1009.8px;transform-origin:0 50%;transform:scaleX(0.8875);">57 <span style="font-family:DejaVu Sans,sans-serif">₽</span></span>
<div class="a" style="left:193px;top:317.2px;width:146.5px;height:20.4px;background:#eff3f7;"></div>
<div class="a" style="left:341.7px;top:317.2px;width:228.1px;height:20.4px;background:#eff3f7;"></div>
<div class="a" style="left:571.6px;top:317.2px;width:73.4px;height:20.4px;background:#eff3f7;"></div>
<div class="a" style="left:646.9px;top:317.2px;width:54.1px;height:20.4px;background:#eff3f7;"></div>
<div class="a" style="left:703.2px;top:317.2px;width:74.7px;height:20.4px;background:#eff3f7;"></div>
<div class="a" style="left:780px;top:317.2px;width:64.3px;height:20.4px;background:#eff3f7;"></div>
<div class="a" style="left:846.4px;top:317.2px;width:36.3px;height:20.4px;background:#eff3f7;"></div>
<div class="a" style="left:884.7px;top:317.2px;width:41.7px;height:20.4px;background:#eff3f7;"></div>
<div class="a" style="left:928.3px;top:317.2px;width:67.8px;height:20.4px;background:#eff3f7;"></div>
<div class="a" style="left:998.3px;top:317.2px;width:35.9px;height:20.4px;background:#eff3f7;"></div>
<div class="a" style="left:1036.5px;top:317.2px;width:27.5px;height:20.4px;background:#eff3f7;"></div>
<svg style="left:200.2px;top:324.3px" width="7.6" height="7.6" viewBox="0 0 7.6 7.6" ><circle cx="1.5" cy="3.8" r="1.5" fill="#aab6b3"/><circle cx="6.2" cy="1.4" r="1.4" fill="#aab6b3"/><circle cx="6.2" cy="6.2" r="1.4" fill="#aab6b3"/><path d="M1.5 3.8L6.2 1.4M1.5 3.8L6.2 6.2" stroke="#aab6b3" stroke-width="1"/></svg>
<svg style="left:216px;top:323px" width="7.2" height="10" viewBox="0 0 7.2 10" ><path d="M0.5 0.5h4.2l2 2v7h-6.2z" fill="none" stroke="#c3c9cf" stroke-width=".9"/><path d="M2.2 4.6h2.8M2.2 6h2.8M2.2 7.4h2.8" stroke="#c3c9cf" stroke-width=".7"/></svg>
<span id="t102" class="t" style="top:322px;font-size:10px;line-height:11px;color:#4a4e54;left:231px;transform-origin:0 50%;transform:scaleX(0.9450);">заказать пиццу</span>
<svg style="left:348.9px;top:324.3px" width="7.6" height="7.6" viewBox="0 0 7.6 7.6" ><circle cx="1.5" cy="3.8" r="1.5" fill="#aab6b3"/><circle cx="6.2" cy="1.4" r="1.4" fill="#aab6b3"/><circle cx="6.2" cy="6.2" r="1.4" fill="#aab6b3"/><path d="M1.5 3.8L6.2 1.4M1.5 3.8L6.2 6.2" stroke="#aab6b3" stroke-width="1"/></svg>
<svg style="left:364.4px;top:323px" width="7.2" height="10" viewBox="0 0 7.2 10" ><path d="M0.5 0.5h4.2l2 2v7h-6.2z" fill="none" stroke="#c3c9cf" stroke-width=".9"/><path d="M2.2 4.6h2.8M2.2 6h2.8M2.2 7.4h2.8" stroke="#c3c9cf" stroke-width=".7"/></svg>
<span id="t103" class="t" style="top:322px;font-size:10px;line-height:11px;color:#4a4e54;left:379px;transform-origin:0 50%;transform:scaleX(0.9450);">доставка пиццы</span>
<span id="t104" class="t" style="top:322px;font-size:10px;line-height:11px;color:#4a4e54;left:578px;transform-origin:0 50%;transform:scaleX(0.8900);">45</span>
<span id="t105" class="t" style="top:322px;font-size:10px;line-height:11px;color:#4a4e54;right:384.4px;transform-origin:100% 50%;transform:scaleX(0.8900);">405 647</span>
<span id="t106" class="t" style="top:322px;font-size:10px;line-height:11px;color:#4a4e54;right:308.7px;transform-origin:100% 50%;transform:scaleX(0.8900);">5 069</span>
<span id="t107" class="t" style="top:322px;font-size:10px;line-height:11px;color:#4a4e54;right:241px;transform-origin:100% 50%;transform:scaleX(0.8900);">5 041</span>
<span id="t108" class="t" style="top:322px;font-size:10px;line-height:11px;color:#4a4e54;right:204px;transform-origin:100% 50%;transform:scaleX(0.8900);">2</span>
<span id="t109" class="t" style="top:322px;font-size:10px;line-height:11px;color:#4a4e54;right:160px;transform-origin:100% 50%;transform:scaleX(0.8900);">0</span>
<span id="t110" class="t" style="top:322px;font-size:10px;line-height:11px;color:#4a4e54;right:89.3px;transform-origin:100% 50%;transform:scaleX(0.8900);">1 000 000</span>
<span id="t111" class="t" style="top:322px;font-size:10px;line-height:11px;color:#4a4e54;left:1009.8px;transform-origin:0 50%;transform:scaleX(0.8875);">48 <span style="font-family:DejaVu Sans,sans-serif">₽</span></span>
<svg style="left:200.2px;top:346.3px" width="7.6" height="7.6" viewBox="0 0 7.6 7.6" ><circle cx="1.5" cy="3.8" r="1.5" fill="#aab6b3"/><circle cx="6.2" cy="1.4" r="1.4" fill="#aab6b3"/><circle cx="6.2" cy="6.2" r="1.4" fill="#aab6b3"/><path d="M1.5 3.8L6.2 1.4M1.5 3.8L6.2 6.2" stroke="#aab6b3" stroke-width="1"/></svg>
<svg style="left:216px;top:345px" width="7.2" height="10" viewBox="0 0 7.2 10" ><path d="M0.5 0.5h4.2l2 2v7h-6.2z" fill="none" stroke="#c3c9cf" stroke-width=".9"/><path d="M2.2 4.6h2.8M2.2 6h2.8M2.2 7.4h2.8" stroke="#c3c9cf" stroke-width=".7"/></svg>
<span id="t112" class="t" style="top:344px;font-size:10px;line-height:11px;color:#4a4e54;left:231px;transform-origin:0 50%;transform:scaleX(0.9450);">пицца заказать на дом</span>
<svg style="left:348.9px;top:346.3px" width="7.6" height="7.6" viewBox="0 0 7.6 7.6" ><circle cx="1.5" cy="3.8" r="1.5" fill="#aab6b3"/><circle cx="6.2" cy="1.4" r="1.4" fill="#aab6b3"/><circle cx="6.2" cy="6.2" r="1.4" fill="#aab6b3"/><path d="M1.5 3.8L6.2 1.4M1.5 3.8L6.2 6.2" stroke="#aab6b3" stroke-width="1"/></svg>
<svg style="left:364.4px;top:345px" width="7.2" height="10" viewBox="0 0 7.2 10" ><path d="M0.5 0.5h4.2l2 2v7h-6.2z" fill="none" stroke="#c3c9cf" stroke-width=".9"/><path d="M2.2 4.6h2.8M2.2 6h2.8M2.2 7.4h2.8" stroke="#c3c9cf" stroke-width=".7"/></svg>
<span id="t113" class="t" style="top:344px;font-size:10px;line-height:11px;color:#4a4e54;left:379px;transform-origin:0 50%;transform:scaleX(0.9450);">суши пицца</span>
<span id="t114" class="t" style="top:344px;font-size:10px;line-height:11px;color:#4a4e54;left:578px;transform-origin:0 50%;transform:scaleX(0.8900);">16</span>
<span id="t115" class="t" style="top:344px;font-size:10px;line-height:11px;color:#4a4e54;right:384.4px;transform-origin:100% 50%;transform:scaleX(0.8900);">135 852</span>
<span id="t116" class="t" style="top:344px;font-size:10px;line-height:11px;color:#4a4e54;right:308.7px;transform-origin:100% 50%;transform:scaleX(0.8900);">4 718</span>
<span id="t117" class="t" style="top:344px;font-size:10px;line-height:11px;color:#4a4e54;right:241px;transform-origin:100% 50%;transform:scaleX(0.8900);">3 733</span>
<span id="t118" class="t" style="top:344px;font-size:10px;line-height:11px;color:#4a4e54;right:204px;transform-origin:100% 50%;transform:scaleX(0.8900);">2</span>
<span id="t119" class="t" style="top:344px;font-size:10px;line-height:11px;color:#4a4e54;right:160px;transform-origin:100% 50%;transform:scaleX(0.8900);">3</span>
<span id="t120" class="t" style="top:344px;font-size:10px;line-height:11px;color:#4a4e54;right:89.3px;transform-origin:100% 50%;transform:scaleX(0.8900);">860 000</span>
<span id="t121" class="t" style="top:344px;font-size:10px;line-height:11px;color:#4a4e54;left:1009.8px;transform-origin:0 50%;transform:scaleX(0.8875);">32 <span style="font-family:DejaVu Sans,sans-serif">₽</span></span>
<div class="a" style="left:193px;top:361.64px;width:146.5px;height:20.4px;background:#eff3f7;"></div>
<div class="a" style="left:341.7px;top:361.64px;width:228.1px;height:20.4px;background:#eff3f7;"></div>
<div class="a" style="left:571.6px;top:361.64px;width:73.4px;height:20.4px;background:#eff3f7;"></div>
<div class="a" style="left:646.9px;top:361.64px;width:54.1px;height:20.4px;background:#eff3f7;"></div>
<div class="a" style="left:703.2px;top:361.64px;width:74.7px;height:20.4px;background:#eff3f7;"></div>
<div class="a" style="left:780px;top:361.64px;width:64.3px;height:20.4px;background:#eff3f7;"></div>
<div class="a" style="left:846.4px;top:361.64px;width:36.3px;height:20.4px;background:#eff3f7;"></div>
<div class="a" style="left:884.7px;top:361.64px;width:41.7px;height:20.4px;background:#eff3f7;"></div>
<div class="a" style="left:928.3px;top:361.64px;width:67.8px;height:20.4px;background:#eff3f7;"></div>
<div class="a" style="left:998.3px;top:361.64px;width:35.9px;height:20.4px;background:#eff3f7;"></div>
<div class="a" style="left:1036.5px;top:361.64px;width:27.5px;height:20.4px;background:#eff3f7;"></div>
<svg style="left:200.2px;top:368.3px" width="7.6" height="7.6" viewBox="0 0 7.6 7.6" ><circle cx="1.5" cy="3.8" r="1.5" fill="#aab6b3"/><circle cx="6.2" cy="1.4" r="1.4" fill="#aab6b3"/><circle cx="6.2" cy="6.2" r="1.4" fill="#aab6b3"/><path d="M1.5 3.8L6.2 1.4M1.5 3.8L6.2 6.2" stroke="#aab6b3" stroke-width="1"/></svg>
<svg style="left:216px;top:367px" width="7.2" height="10" viewBox="0 0 7.2 10" ><path d="M0.5 0.5h4.2l2 2v7h-6.2z" fill="none" stroke="#c3c9cf" stroke-width=".9"/><path d="M2.2 4.6h2.8M2.2 6h2.8M2.2 7.4h2.8" stroke="#c3c9cf" stroke-width=".7"/></svg>
<span id="t122" class="t" style="top:366px;font-size:10px;line-height:11px;color:#4a4e54;left:231px;transform-origin:0 50%;transform:scaleX(0.9450);">заказать пиццу</span>
<svg style="left:348.9px;top:368.3px" width="7.6" height="7.6" viewBox="0 0 7.6 7.6" ><circle cx="1.5" cy="3.8" r="1.5" fill="#aab6b3"/><circle cx="6.2" cy="1.4" r="1.4" fill="#aab6b3"/><circle cx="6.2" cy="6.2" r="1.4" fill="#aab6b3"/><path d="M1.5 3.8L6.2 1.4M1.5 3.8L6.2 6.2" stroke="#aab6b3" stroke-width="1"/></svg>
<svg style="left:364.4px;top:367px" width="7.2" height="10" viewBox="0 0 7.2 10" ><path d="M0.5 0.5h4.2l2 2v7h-6.2z" fill="none" stroke="#c3c9cf" stroke-width=".9"/><path d="M2.2 4.6h2.8M2.2 6h2.8M2.2 7.4h2.8" stroke="#c3c9cf" stroke-width=".7"/></svg>
<span id="t123" class="t" style="top:366px;font-size:10px;line-height:11px;color:#4a4e54;left:379px;transform-origin:0 50%;transform:scaleX(0.9450);">пиццы доставка</span>
<span id="t124" class="t" style="top:366px;font-size:10px;line-height:11px;color:#4a4e54;left:578px;transform-origin:0 50%;transform:scaleX(0.8900);">45</span>
<span id="t125" class="t" style="top:366px;font-size:10px;line-height:11px;color:#4a4e54;right:384.4px;transform-origin:100% 50%;transform:scaleX(0.8900);">340 912</span>
<span id="t126" class="t" style="top:366px;font-size:10px;line-height:11px;color:#4a4e54;right:308.7px;transform-origin:100% 50%;transform:scaleX(0.8900);">4 326</span>
<span id="t127" class="t" style="top:366px;font-size:10px;line-height:11px;color:#4a4e54;right:241px;transform-origin:100% 50%;transform:scaleX(0.8900);">39</span>
<span id="t128" class="t" style="top:366px;font-size:10px;line-height:11px;color:#4a4e54;right:204px;transform-origin:100% 50%;transform:scaleX(0.8900);">2</span>
<span id="t129" class="t" style="top:366px;font-size:10px;line-height:11px;color:#4a4e54;right:160px;transform-origin:100% 50%;transform:scaleX(0.8900);">3</span>
<span id="t130" class="t" style="top:366px;font-size:10px;line-height:11px;color:#4a4e54;right:89.3px;transform-origin:100% 50%;transform:scaleX(0.8900);">1 000 000</span>
<span id="t131" class="t" style="top:366px;font-size:10px;line-height:11px;color:#4a4e54;left:1009.8px;transform-origin:0 50%;transform:scaleX(0.8875);">62 <span style="font-family:DejaVu Sans,sans-serif">₽</span></span>
<svg style="left:200.2px;top:390.3px" width="7.6" height="7.6" viewBox="0 0 7.6 7.6" ><circle cx="1.5" cy="3.8" r="1.5" fill="#aab6b3"/><circle cx="6.2" cy="1.4" r="1.4" fill="#aab6b3"/><circle cx="6.2" cy="6.2" r="1.4" fill="#aab6b3"/><path d="M1.5 3.8L6.2 1.4M1.5 3.8L6.2 6.2" stroke="#aab6b3" stroke-width="1"/></svg>
<svg style="left:216px;top:389px" width="7.2" height="10" viewBox="0 0 7.2 10" ><path d="M0.5 0.5h4.2l2 2v7h-6.2z" fill="none" stroke="#c3c9cf" stroke-width=".9"/><path d="M2.2 4.6h2.8M2.2 6h2.8M2.2 7.4h2.8" stroke="#c3c9cf" stroke-width=".7"/></svg>
<span id="t132" class="t" style="top:388px;font-size:10px;line-height:11px;color:#4a4e54;left:231px;transform-origin:0 50%;transform:scaleX(0.9450);">заказать пиццу</span>
<svg style="left:348.9px;top:390.3px" width="7.6" height="7.6" viewBox="0 0 7.6 7.6" ><circle cx="1.5" cy="3.8" r="1.5" fill="#aab6b3"/><circle cx="6.2" cy="1.4" r="1.4" fill="#aab6b3"/><circle cx="6.2" cy="6.2" r="1.4" fill="#aab6b3"/><path d="M1.5 3.8L6.2 1.4M1.5 3.8L6.2 6.2" stroke="#aab6b3" stroke-width="1"/></svg>
<svg style="left:364.4px;top:389px" width="7.2" height="10" viewBox="0 0 7.2 10" ><path d="M0.5 0.5h4.2l2 2v7h-6.2z" fill="none" stroke="#c3c9cf" stroke-width=".9"/><path d="M2.2 4.6h2.8M2.2 6h2.8M2.2 7.4h2.8" stroke="#c3c9cf" stroke-width=".7"/></svg>
<span id="t133" class="t" style="top:388px;font-size:10px;line-height:11px;color:#4a4e54;left:379px;transform-origin:0 50%;transform:scaleX(0.9450);">доставка пицца</span>
<span id="t134" class="t" style="top:388px;font-size:10px;line-height:11px;color:#4a4e54;left:578px;transform-origin:0 50%;transform:scaleX(0.8900);">40</span>
<span id="t135" class="t" style="top:388px;font-size:10px;line-height:11px;color:#4a4e54;right:384.4px;transform-origin:100% 50%;transform:scaleX(0.8900);">405 647</span>
<span id="t136" class="t" style="top:388px;font-size:10px;line-height:11px;color:#4a4e54;right:308.7px;transform-origin:100% 50%;transform:scaleX(0.8900);">4 070</span>
<span id="t137" class="t" style="top:388px;font-size:10px;line-height:11px;color:#4a4e54;right:241px;transform-origin:100% 50%;transform:scaleX(0.8900);">352</span>
<span id="t138" class="t" style="top:388px;font-size:10px;line-height:11px;color:#4a4e54;right:204px;transform-origin:100% 50%;transform:scaleX(0.8900);">2</span>
<span id="t139" class="t" style="top:388px;font-size:10px;line-height:11px;color:#4a4e54;right:160px;transform-origin:100% 50%;transform:scaleX(0.8900);">2</span>
<span id="t140" class="t" style="top:388px;font-size:10px;line-height:11px;color:#4a4e54;right:89.3px;transform-origin:100% 50%;transform:scaleX(0.8900);">1 000 000</span>
<span id="t141" class="t" style="top:388px;font-size:10px;line-height:11px;color:#4a4e54;left:1009.8px;transform-origin:0 50%;transform:scaleX(0.8875);">54 <span style="font-family:DejaVu Sans,sans-serif">₽</span></span>
<div class="a" style="left:193px;top:406.08px;width:146.5px;height:20.4px;background:#eff3f7;"></div>
<div class="a" style="left:341.7px;top:406.08px;width:228.1px;height:20.4px;background:#eff3f7;"></div>
<div class="a" style="left:571.6px;top:406.08px;width:73.4px;height:20.4px;background:#eff3f7;"></div>
<div class="a" style="left:646.9px;top:406.08px;width:54.1px;height:20.4px;background:#eff3f7;"></div>
<div class="a" style="left:703.2px;top:406.08px;width:74.7px;height:20.4px;background:#eff3f7;"></div>
<div class="a" style="left:780px;top:406.08px;width:64.3px;height:20.4px;background:#eff3f7;"></div>
<div class="a" style="left:846.4px;top:406.08px;width:36.3px;height:20.4px;background:#eff3f7;"></div>
<div class="a" style="left:884.7px;top:406.08px;width:41.7px;height:20.4px;background:#eff3f7;"></div>
<div class="a" style="left:928.3px;top:406.08px;width:67.8px;height:20.4px;background:#eff3f7;"></div>
<div class="a" style="left:998.3px;top:406.08px;width:35.9px;height:20.4px;background:#eff3f7;"></div>
<div class="a" style="left:1036.5px;top:406.08px;width:27.5px;height:20.4px;background:#eff3f7;"></div>
<svg style="left:200.2px;top:413.3px" width="7.6" height="7.6" viewBox="0 0 7.6 7.6" ><circle cx="1.5" cy="3.8" r="1.5" fill="#aab6b3"/><circle cx="6.2" cy="1.4" r="1.4" fill="#aab6b3"/><circle cx="6.2" cy="6.2" r="1.4" fill="#aab6b3"/><path d="M1.5 3.8L6.2 1.4M1.5 3.8L6.2 6.2" stroke="#aab6b3" stroke-width="1"/></svg>
<svg style="left:216px;top:412px" width="7.2" height="10" viewBox="0 0 7.2 10" ><path d="M0.5 0.5h4.2l2 2v7h-6.2z" fill="none" stroke="#c3c9cf" stroke-width=".9"/><path d="M2.2 4.6h2.8M2.2 6h2.8M2.2 7.4h2.8" stroke="#c3c9cf" stroke-width=".7"/></svg>
<span id="t142" class="t" style="top:411px;font-size:10px;line-height:11px;color:#4a4e54;left:231px;transform-origin:0 50%;transform:scaleX(0.9450);">заказать пиццу</span>
<svg style="left:348.9px;top:413.3px" width="7.6" height="7.6" viewBox="0 0 7.6 7.6" ><circle cx="1.5" cy="3.8" r="1.5" fill="#aab6b3"/><circle cx="6.2" cy="1.4" r="1.4" fill="#aab6b3"/><circle cx="6.2" cy="6.2" r="1.4" fill="#aab6b3"/><path d="M1.5 3.8L6.2 1.4M1.5 3.8L6.2 6.2" stroke="#aab6b3" stroke-width="1"/></svg>
<svg style="left:364.4px;top:412px" width="7.2" height="10" viewBox="0 0 7.2 10" ><path d="M0.5 0.5h4.2l2 2v7h-6.2z" fill="none" stroke="#c3c9cf" stroke-width=".9"/><path d="M2.2 4.6h2.8M2.2 6h2.8M2.2 7.4h2.8" stroke="#c3c9cf" stroke-width=".7"/></svg>
<span id="t143" class="t" style="top:411px;font-size:10px;line-height:11px;color:#4a4e54;left:379px;transform-origin:0 50%;transform:scaleX(0.9450);">заказать пицца</span>
<span id="t144" class="t" style="top:411px;font-size:10px;line-height:11px;color:#4a4e54;left:578px;transform-origin:0 50%;transform:scaleX(0.8900);">45</span>
<span id="t145" class="t" style="top:411px;font-size:10px;line-height:11px;color:#4a4e54;right:384.4px;transform-origin:100% 50%;transform:scaleX(0.8900);">337 733</span>
<span id="t146" class="t" style="top:411px;font-size:10px;line-height:11px;color:#4a4e54;right:308.7px;transform-origin:100% 50%;transform:scaleX(0.8900);">3 638</span>
<span id="t147" class="t" style="top:411px;font-size:10px;line-height:11px;color:#4a4e54;right:241px;transform-origin:100% 50%;transform:scaleX(0.8900);">9</span>
<span id="t148" class="t" style="top:411px;font-size:10px;line-height:11px;color:#4a4e54;right:204px;transform-origin:100% 50%;transform:scaleX(0.8900);">2</span>
<span id="t149" class="t" style="top:411px;font-size:10px;line-height:11px;color:#4a4e54;right:160px;transform-origin:100% 50%;transform:scaleX(0.8900);">3</span>
<span id="t150" class="t" style="top:411px;font-size:10px;line-height:11px;color:#4a4e54;right:89.3px;transform-origin:100% 50%;transform:scaleX(0.8900);">939</span>
<span id="t151" class="t" style="top:411px;font-size:10px;line-height:11px;color:#4a4e54;left:1009.8px;transform-origin:0 50%;transform:scaleX(0.8875);">51 <span style="font-family:DejaVu Sans,sans-serif">₽</span></span>
<svg style="left:200.2px;top:435.3px" width="7.6" height="7.6" viewBox="0 0 7.6 7.6" ><circle cx="1.5" cy="3.8" r="1.5" fill="#aab6b3"/><circle cx="6.2" cy="1.4" r="1.4" fill="#aab6b3"/><circle cx="6.2" cy="6.2" r="1.4" fill="#aab6b3"/><path d="M1.5 3.8L6.2 1.4M1.5 3.8L6.2 6.2" stroke="#aab6b3" stroke-width="1"/></svg>
<svg style="left:216px;top:434px" width="7.2" height="10" viewBox="0 0 7.2 10" ><path d="M0.5 0.5h4.2l2 2v7h-6.2z" fill="none" stroke="#c3c9cf" stroke-width=".9"/><path d="M2.2 4.6h2.8M2.2 6h2.8M2.2 7.4h2.8" stroke="#c3c9cf" stroke-width=".7"/></svg>
<span id="t152" class="t" style="top:433px;font-size:10px;line-height:11px;color:#4a4e54;left:231px;transform-origin:0 50%;transform:scaleX(0.9450);">заказать пиццу</span>
<svg style="left:348.9px;top:435.3px" width="7.6" height="7.6" viewBox="0 0 7.6 7.6" ><circle cx="1.5" cy="3.8" r="1.5" fill="#aab6b3"/><circle cx="6.2" cy="1.4" r="1.4" fill="#aab6b3"/><circle cx="6.2" cy="6.2" r="1.4" fill="#aab6b3"/><path d="M1.5 3.8L6.2 1.4M1.5 3.8L6.2 6.2" stroke="#aab6b3" stroke-width="1"/></svg>
<svg style="left:364.4px;top:434px" width="7.2" height="10" viewBox="0 0 7.2 10" ><path d="M0.5 0.5h4.2l2 2v7h-6.2z" fill="none" stroke="#c3c9cf" stroke-width=".9"/><path d="M2.2 4.6h2.8M2.2 6h2.8M2.2 7.4h2.8" stroke="#c3c9cf" stroke-width=".7"/></svg>
<span id="t153" class="t" style="top:433px;font-size:10px;line-height:11px;color:#4a4e54;left:379px;transform-origin:0 50%;transform:scaleX(0.9450);">пицца доставка</span>
<span id="t154" class="t" style="top:433px;font-size:10px;line-height:11px;color:#4a4e54;left:578px;transform-origin:0 50%;transform:scaleX(0.8900);">49</span>
<span id="t155" class="t" style="top:433px;font-size:10px;line-height:11px;color:#4a4e54;right:384.4px;transform-origin:100% 50%;transform:scaleX(0.8900);">340 912</span>
<span id="t156" class="t" style="top:433px;font-size:10px;line-height:11px;color:#4a4e54;right:308.7px;transform-origin:100% 50%;transform:scaleX(0.8900);">3 517</span>
<span id="t157" class="t" style="top:433px;font-size:10px;line-height:11px;color:#4a4e54;right:241px;transform-origin:100% 50%;transform:scaleX(0.8900);">3 272</span>
<span id="t158" class="t" style="top:433px;font-size:10px;line-height:11px;color:#4a4e54;right:204px;transform-origin:100% 50%;transform:scaleX(0.8900);">2</span>
<span id="t159" class="t" style="top:433px;font-size:10px;line-height:11px;color:#4a4e54;right:160px;transform-origin:100% 50%;transform:scaleX(0.8900);">6</span>
<span id="t160" class="t" style="top:433px;font-size:10px;line-height:11px;color:#4a4e54;right:89.3px;transform-origin:100% 50%;transform:scaleX(0.8900);">1 000 000</span>
<span id="t161" class="t" style="top:433px;font-size:10px;line-height:11px;color:#4a4e54;left:1009.8px;transform-origin:0 50%;transform:scaleX(0.8875);">70 <span style="font-family:DejaVu Sans,sans-serif">₽</span></span>
<div class="a" style="left:193px;top:450.52px;width:146.5px;height:20.4px;background:#eff3f7;"></div>
<div class="a" style="left:341.7px;top:450.52px;width:228.1px;height:20.4px;background:#eff3f7;"></div>
<div class="a" style="left:571.6px;top:450.52px;width:73.4px;height:20.4px;background:#eff3f7;"></div>
<div class="a" style="left:646.9px;top:450.52px;width:54.1px;height:20.4px;background:#eff3f7;"></div>
<div class="a" style="left:703.2px;top:450.52px;width:74.7px;height:20.4px;background:#eff3f7;"></div>
<div class="a" style="left:780px;top:450.52px;width:64.3px;height:20.4px;background:#eff3f7;"></div>
<div class="a" style="left:846.4px;top:450.52px;width:36.3px;height:20.4px;background:#eff3f7;"></div>
<div class="a" style="left:884.7px;top:450.52px;width:41.7px;height:20.4px;background:#eff3f7;"></div>
<div class="a" style="left:928.3px;top:450.52px;width:67.8px;height:20.4px;background:#eff3f7;"></div>
<div class="a" style="left:998.3px;top:450.52px;width:35.9px;height:20.4px;background:#eff3f7;"></div>
<div class="a" style="left:1036.5px;top:450.52px;width:27.5px;height:20.4px;background:#eff3f7;"></div>
<svg style="left:200.2px;top:457.3px" width="7.6" height="7.6" viewBox="0 0 7.6 7.6" ><circle cx="1.5" cy="3.8" r="1.5" fill="#aab6b3"/><circle cx="6.2" cy="1.4" r="1.4" fill="#aab6b3"/><circle cx="6.2" cy="6.2" r="1.4" fill="#aab6b3"/><path d="M1.5 3.8L6.2 1.4M1.5 3.8L6.2 6.2" stroke="#aab6b3" stroke-width="1"/></svg>
<svg style="left:216px;top:456px" width="7.2" height="10" viewBox="0 0 7.2 10" ><path d="M0.5 0.5h4.2l2 2v7h-6.2z" fill="none" stroke="#c3c9cf" stroke-width=".9"/><path d="M2.2 4.6h2.8M2.2 6h2.8M2.2 7.4h2.8" stroke="#c3c9cf" stroke-width=".7"/></svg>
<span id="t162" class="t" style="top:455px;font-size:10px;line-height:11px;color:#4a4e54;left:231px;transform-origin:0 50%;transform:scaleX(0.9450);">заказать пиццу</span>
<svg style="left:348.9px;top:457.3px" width="7.6" height="7.6" viewBox="0 0 7.6 7.6" ><circle cx="1.5" cy="3.8" r="1.5" fill="#aab6b3"/><circle cx="6.2" cy="1.4" r="1.4" fill="#aab6b3"/><circle cx="6.2" cy="6.2" r="1.4" fill="#aab6b3"/><path d="M1.5 3.8L6.2 1.4M1.5 3.8L6.2 6.2" stroke="#aab6b3" stroke-width="1"/></svg>
<svg style="left:364.4px;top:456px" width="7.2" height="10" viewBox="0 0 7.2 10" ><path d="M0.5 0.5h4.2l2 2v7h-6.2z" fill="none" stroke="#c3c9cf" stroke-width=".9"/><path d="M2.2 4.6h2.8M2.2 6h2.8M2.2 7.4h2.8" stroke="#c3c9cf" stroke-width=".7"/></svg>
<span id="t163" class="t" style="top:455px;font-size:10px;line-height:11px;color:#4a4e54;left:379px;transform-origin:0 50%;transform:scaleX(0.9450);">pizza</span>
<span id="t164" class="t" style="top:455px;font-size:10px;line-height:11px;color:#4a4e54;left:578px;transform-origin:0 50%;transform:scaleX(0.8900);">26</span>
<span id="t165" class="t" style="top:455px;font-size:10px;line-height:11px;color:#4a4e54;right:384.4px;transform-origin:100% 50%;transform:scaleX(0.8900);">506 388</span>
<span id="t166" class="t" style="top:455px;font-size:10px;line-height:11px;color:#4a4e54;right:308.7px;transform-origin:100% 50%;transform:scaleX(0.8900);">3 510</span>
<span id="t167" class="t" style="top:455px;font-size:10px;line-height:11px;color:#4a4e54;right:241px;transform-origin:100% 50%;transform:scaleX(0.8900);">3 510</span>
<span id="t168" class="t" style="top:455px;font-size:10px;line-height:11px;color:#4a4e54;right:204px;transform-origin:100% 50%;transform:scaleX(0.8900);">1</span>
<span id="t169" class="t" style="top:455px;font-size:10px;line-height:11px;color:#4a4e54;right:160px;transform-origin:100% 50%;transform:scaleX(0.8900);">2</span>
<span id="t170" class="t" style="top:455px;font-size:10px;line-height:11px;color:#4a4e54;right:89.3px;transform-origin:100% 50%;transform:scaleX(0.8900);">9 000 000</span>
<span id="t171" class="t" style="top:455px;font-size:10px;line-height:11px;color:#4a4e54;left:1009.8px;transform-origin:0 50%;transform:scaleX(0.8875);">36 <span style="font-family:DejaVu Sans,sans-serif">₽</span></span>
<svg style="left:200.2px;top:479.3px" width="7.6" height="7.6" viewBox="0 0 7.6 7.6" ><circle cx="1.5" cy="3.8" r="1.5" fill="#aab6b3"/><circle cx="6.2" cy="1.4" r="1.4" fill="#aab6b3"/><circle cx="6.2" cy="6.2" r="1.4" fill="#aab6b3"/><path d="M1.5 3.8L6.2 1.4M1.5 3.8L6.2 6.2" stroke="#aab6b3" stroke-width="1"/></svg>
<svg style="left:216px;top:478px" width="7.2" height="10" viewBox="0 0 7.2 10" ><path d="M0.5 0.5h4.2l2 2v7h-6.2z" fill="none" stroke="#c3c9cf" stroke-width=".9"/><path d="M2.2 4.6h2.8M2.2 6h2.8M2.2 7.4h2.8" stroke="#c3c9cf" stroke-width=".7"/></svg>
<span id="t172" class="t" style="top:477px;font-size:10px;line-height:11px;color:#4a4e54;left:231px;transform-origin:0 50%;transform:scaleX(0.9450);">заказать пиццу</span>
<svg style="left:348.9px;top:479.3px" width="7.6" height="7.6" viewBox="0 0 7.6 7.6" ><circle cx="1.5" cy="3.8" r="1.5" fill="#aab6b3"/><circle cx="6.2" cy="1.4" r="1.4" fill="#aab6b3"/><circle cx="6.2" cy="6.2" r="1.4" fill="#aab6b3"/><path d="M1.5 3.8L6.2 1.4M1.5 3.8L6.2 6.2" stroke="#aab6b3" stroke-width="1"/></svg>
<svg style="left:364.4px;top:478px" width="7.2" height="10" viewBox="0 0 7.2 10" ><path d="M0.5 0.5h4.2l2 2v7h-6.2z" fill="none" stroke="#c3c9cf" stroke-width=".9"/><path d="M2.2 4.6h2.8M2.2 6h2.8M2.2 7.4h2.8" stroke="#c3c9cf" stroke-width=".7"/></svg>
<span id="t173" class="t" style="top:477px;font-size:10px;line-height:11px;color:#4a4e54;left:379px;transform-origin:0 50%;transform:scaleX(0.9450);">пицца заказать</span>
<span id="t174" class="t" style="top:477px;font-size:10px;line-height:11px;color:#4a4e54;left:578px;transform-origin:0 50%;transform:scaleX(0.8900);">49</span>
<span id="t175" class="t" style="top:477px;font-size:10px;line-height:11px;color:#4a4e54;right:384.4px;transform-origin:100% 50%;transform:scaleX(0.8900);">273 046</span>
<span id="t176" class="t" style="top:477px;font-size:10px;line-height:11px;color:#4a4e54;right:308.7px;transform-origin:100% 50%;transform:scaleX(0.8900);">3 380</span>
<span id="t177" class="t" style="top:477px;font-size:10px;line-height:11px;color:#4a4e54;right:241px;transform-origin:100% 50%;transform:scaleX(0.8900);">3 379</span>
<span id="t178" class="t" style="top:477px;font-size:10px;line-height:11px;color:#4a4e54;right:204px;transform-origin:100% 50%;transform:scaleX(0.8900);">2</span>
<span id="t179" class="t" style="top:477px;font-size:10px;line-height:11px;color:#4a4e54;right:160px;transform-origin:100% 50%;transform:scaleX(0.8900);">4</span>
<span id="t180" class="t" style="top:477px;font-size:10px;line-height:11px;color:#4a4e54;right:89.3px;transform-origin:100% 50%;transform:scaleX(0.8900);">975 000</span>
<span id="t181" class="t" style="top:477px;font-size:10px;line-height:11px;color:#4a4e54;left:1009.8px;transform-origin:0 50%;transform:scaleX(0.8875);">60 <span style="font-family:DejaVu Sans,sans-serif">₽</span></span>
<div class="a" style="left:193px;top:494.96px;width:146.5px;height:5.34px;background:#eff3f7;"></div>
<div class="a" style="left:341.7px;top:494.96px;width:228.1px;height:5.34px;background:#eff3f7;"></div>
<div class="a" style="left:571.6px;top:494.96px;width:73.4px;height:5.34px;background:#eff3f7;"></div>
<div class="a" style="left:646.9px;top:494.96px;width:54.1px;height:5.34px;background:#eff3f7;"></div>
<div class="a" style="left:703.2px;top:494.96px;width:74.7px;height:5.34px;background:#eff3f7;"></div>
<div class="a" style="left:780px;top:494.96px;width:64.3px;height:5.34px;background:#eff3f7;"></div>
<div class="a" style="left:846.4px;top:494.96px;width:36.3px;height:5.34px;background:#eff3f7;"></div>
<div class="a" style="left:884.7px;top:494.96px;width:41.7px;height:5.34px;background:#eff3f7;"></div>
<div class="a" style="left:928.3px;top:494.96px;width:67.8px;height:5.34px;background:#eff3f7;"></div>
<div class="a" style="left:998.3px;top:494.96px;width:35.9px;height:5.34px;background:#eff3f7;"></div>
<div class="a" style="left:1036.5px;top:494.96px;width:27.5px;height:5.34px;background:#eff3f7;"></div>
<svg style="left:1046.2px;top:300.2px" width="9.6" height="9.6" viewBox="0 0 9.6 9.6" ><circle cx="4.8" cy="4.8" r="4.4" fill="#d4d8dc"/><path d="M2 3c1 .4 2 .2 2.6 1.2S3.4 6.4 4.4 7.6" fill="none" stroke="#f4f5f6" stroke-width="1"/><path d="M6 1.6c.4 1 1.6 1.2 2.4 2.6" fill="none" stroke="#f4f5f6" stroke-width="1"/></svg>
<div class="a" style="left:177.5px;top:500.2px;width:900.5px;height:6px;background:#fff;"></div>
<div class="a" style="left:1035.2px;top:458.5px;width:30px;height:30px;background:#63a81c;border-radius:15px;box-shadow:0 1px 3px rgba(0,0,0,.25);"></div>
<svg style="left:1038.8px;top:463.6px" width="22.6" height="20.2" viewBox="0 0 19 17" ><path d="M1 5.6C1 3 3.4 1 6.6 1s5.6 2 5.6 4.6-2.4 4.6-5.6 4.6c-.6 0-1.2-.1-1.8-.2L2.2 11.4l.4-2.2C1.6 8.2 1 7 1 5.6z" fill="none" stroke="#fff" stroke-width="1.3" stroke-linejoin="round"/><path d="M13.6 6.2c2.4.4 4.2 2 4.2 4.2 0 1.2-.6 2.2-1.4 3l.4 2.2-2.4-1.2c-.6.2-1.2.2-1.8.2-2.2 0-4-1-4.8-2.4" fill="none" stroke="#fff" stroke-width="1.3" stroke-linejoin="round"/></svg>
</div>
</body></html>
